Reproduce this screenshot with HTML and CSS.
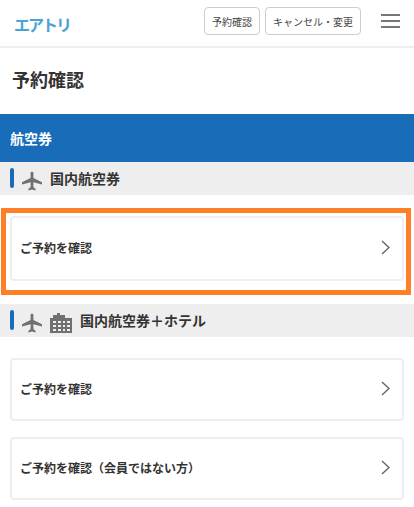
FILE: index.html
```html
<!DOCTYPE html>
<html lang="ja">
<head>
<meta charset="utf-8">
<title>予約確認</title>
<link rel="stylesheet" href="styles.css">
</head>
<body>
<svg class="defs" width="0" height="0" aria-hidden="true">
  <symbol id="plane" viewBox="0 0 20 20"><path d="M8.6 1.6C8.6.6 11.4.6 11.4 1.6V7L20 11.2V13.4L11.4 11.2V16L13.6 18V19.6L10 18.6 6.4 19.6V18L8.6 16V11.2L0 13.4V11.2L8.6 7Z"/></symbol>
  <symbol id="hotel" viewBox="0 0 22 20"><path fill-rule="evenodd" d="M7 0H10V2H15V5H22V20H0V5H3V2H7ZM3 8V10H6V8ZM8 8V10H11V8ZM13 8V10H15V8ZM17 8V10H20V8ZM3 12V14H6V12ZM8 12V14H11V12ZM13 12V14H15V12ZM17 12V14H20V12ZM3 16V18H6V16ZM8 16V18H11V16ZM13 16V18H15V16ZM17 16V18H20V16Z"/></symbol>
  <symbol id="chev" viewBox="0 0 9 15"><path d="M1 1L8 7.5 1 14" fill="none" stroke="currentColor" stroke-width="1.4"/></symbol>
</svg>
<header class="topbar">
  <span class="logo">エアトリ</span>
  <nav class="topnav">
    <a class="pill">予約確認</a>
    <a class="pill">キャンセル・変更</a>
    <span class="burger"><i></i><i></i><i></i></span>
  </nav>
</header>
<h1 class="title">予約確認</h1>
<h2 class="band">航空券</h2>
<div class="sub sub-one">
  <span class="bar"></span>
  <svg class="ico plane"><use href="#plane"/></svg>
  <span>国内航空券</span>
</div>
<div class="mark">
  <a class="card card-first"><span>ご予約を確認</span><svg class="chev"><use href="#chev"/></svg></a>
</div>
<div class="sub sub-two">
  <span class="bar"></span>
  <svg class="ico plane"><use href="#plane"/></svg>
  <svg class="ico hotel"><use href="#hotel"/></svg>
  <span class="big">国内航空券＋ホテル</span>
</div>
<div class="list">
  <a class="card"><span>ご予約を確認</span><svg class="chev"><use href="#chev"/></svg></a>
  <a class="card"><span>ご予約を確認（会員ではない方）</span><svg class="chev"><use href="#chev"/></svg></a>
</div>
</body>
</html>
```
FILE: styles.css
```css
* { box-sizing: border-box; }
html, body { margin: 0; padding: 0; }
body {
  width: 414px;
  height: 507px;
  overflow: hidden;
  background: #fff;
  color: #333;
  font-family: "Noto Sans CJK JP", "Noto Sans", sans-serif;
}
.defs { display: block; height: 0; }
.topbar {
  height: 48px;
  border-bottom: 2px solid #eee;
  display: flex;
  align-items: center;
  justify-content: space-between;
  padding: 5px 14px 0 14px;
}
.logo {
  color: #4ba3d3;
  font-size: 16px;
  font-weight: 700;
  letter-spacing: -2px;
  line-height: 1;
  margin-top: -3px;
}
.topnav { display: flex; align-items: center; margin-top: -9px; }
.pill {
  height: 28px;
  border: 1px solid #ccc;
  border-radius: 4px;
  display: flex;
  align-items: center;
  justify-content: center;
  font-size: 10px;
  color: #444;
  white-space: nowrap;
}
.pill:nth-child(1) { width: 56px; margin-right: 5px; }
.pill:nth-child(2) { width: 96px; margin-right: 20px; }
.burger { display: flex; flex-direction: column; gap: 4px; width: 19px; }
.burger i { display: block; height: 2px; background: #777; }
.title {
  margin: 0;
  height: 66px;
  padding: 18px 0 0 12px;
  font-size: 18px;
  line-height: 26px;
  font-weight: 700;
  color: #333;
}
.band {
  margin: 0;
  height: 48px;
  background: #186cb8;
  color: #fff;
  font-size: 14px;
  font-weight: 700;
  display: flex;
  align-items: center;
  padding: 0 0 1px 10px;
}
.sub {
  height: 33px;
  background: #eee;
  display: flex;
  align-items: center;
  padding: 0 0 2px 10px;
  font-size: 14px;
  font-weight: 700;
  color: #333;
}
.bar { width: 4px; height: 20px; border-radius: 2px; background: #186cb8; margin-right: 8px; }
.ico { fill: #707070; flex: none; margin-top: 6px; }
.plane { width: 20px; height: 20px; }
.hotel { width: 22px; height: 20px; margin-left: 8px; }
.sub-one > span:last-child { margin-left: 8px; }
.big { font-size: 14px; margin-left: 8px; }
.mark {
  margin: 13px 3px 9px 1px;
  height: 87px;
  border: 5px solid #ff7f27;
  padding: 3px 2px 0 4px;
}
.sub-two { margin-bottom: 21px; }
.card {
  display: flex;
  align-items: center;
  justify-content: space-between;
  height: 63px;
  border: 2px solid #eee;
  border-radius: 4px;
  padding: 0 12px 3px 8px;
  font-size: 12px;
  font-weight: 700;
  color: #333;
  background: #fff;
}
.card-first { height: 65px; }
.chev { width: 9px; height: 15px; color: #666; }
.list { display: flex; flex-direction: column; gap: 16px; padding: 0 10px; }
```
